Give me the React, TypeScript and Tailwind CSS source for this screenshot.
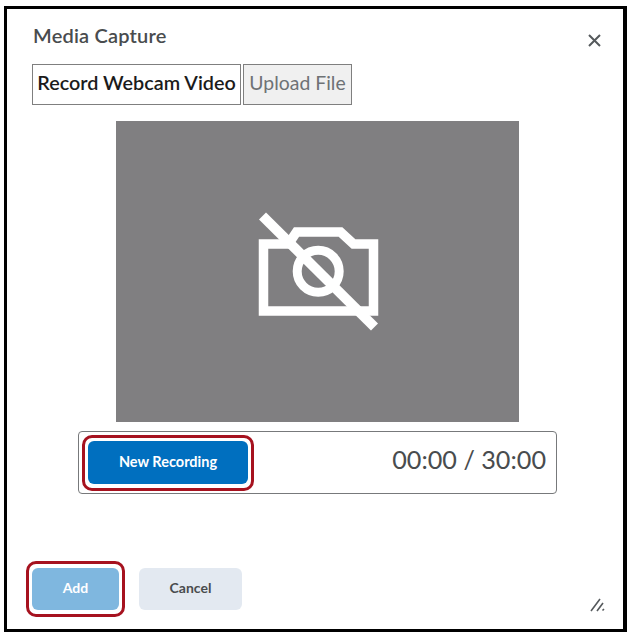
const font = { fontFamily: "Lato, sans-serif" };

function CameraOff() {
  return (
    <svg width="170" height="160" viewBox="2.5 2 170 160" fill="none" stroke="#ffffff">
      <path d="M33 54H58L66 42H110L123 54H143V121H33Z" strokeWidth="9.5" />
      <circle cx="87.7" cy="81.3" r="21" strokeWidth="9" />
      <path d="M32 26L144 137" strokeWidth="10" />
    </svg>
  );
}

export default function App() {
  return (
    <div className="h-[641px] w-[634px] bg-white pl-[4px] pt-[6px] text-[#494c4e]" style={font}>
      <div className="relative h-[626px] w-[623px] border-[3px] border-r-[4px] border-black">
        <div className="flex items-start justify-between pl-[26px] pr-[22px] pt-[14px]">
          <h1 className="text-[20px] leading-[24px] font-semibold tracking-[0.2px] text-[#494c4e]">Media Capture</h1>
          <svg className="mt-[11px]" width="13" height="13" viewBox="0 0 13 13" stroke="#55595c" strokeWidth="2">
            <path d="M1 1L12 12M12 1L1 12" />
          </svg>
        </div>

        <div className="mt-[17px] flex gap-[2px] pl-[25px]">
          <button className="h-[41px] w-[209px] border border-[#7f7f7f] bg-white pb-[3px] text-[19.8px] font-semibold text-[#1b1b1b]">
            Record Webcam Video
          </button>
          <button className="h-[41px] w-[109px] border border-[#7f7f7f] bg-[#f0f0f0] pb-[3px] text-[19.4px] text-[#6e7275]">
            Upload File
          </button>
        </div>

        <div className="mt-[16px] ml-[109px] flex h-[301px] w-[403px] items-center justify-center bg-[#807f81]">
          <CameraOff />
        </div>

        <div className="mt-[9px] ml-[71px] flex h-[63px] w-[479px] items-start justify-between rounded-[4px] border border-[#77797b] pl-[3px] pr-[10px] pt-[3px]">
          <div className="rounded-[10px] border-[3px] border-[#a6121f] px-[3px] pb-[4px] pt-[3px]">
            <button className="block h-[43px] w-[160px] rounded-[6px] bg-[#006fbf] pb-[1px] text-[14.5px] font-bold text-white">
              New Recording
            </button>
          </div>
          <span className="mt-[12px] text-[25.2px] leading-none text-[#494c4e]">00:00 / 30:00</span>
        </div>

        <div className="mt-[67px] flex items-center pl-[19px]">
          <div className="rounded-[10px] border-[3px] border-[#a6121f] px-[3px] py-[4px]">
            <button className="block h-[42px] w-[87px] rounded-[6px] bg-[#7fb7df] pb-[3px] text-[14px] font-bold text-white">
              Add
            </button>
          </div>
          <button className="ml-[14px] h-[42px] w-[103px] rounded-[6px] bg-[#e3e9f1] pb-[3px] text-[14px] font-bold text-[#494c4e]">
            Cancel
          </button>
          <svg className="mt-[32px] ml-[347px]" width="16" height="14" viewBox="0 0 16 14" stroke="#55595c" strokeWidth="1.6">
            <path d="M2 13L11 1M8 13L14 5M13.5 12.5L15 11" />
          </svg>
        </div>
      </div>
    </div>
  );
}
